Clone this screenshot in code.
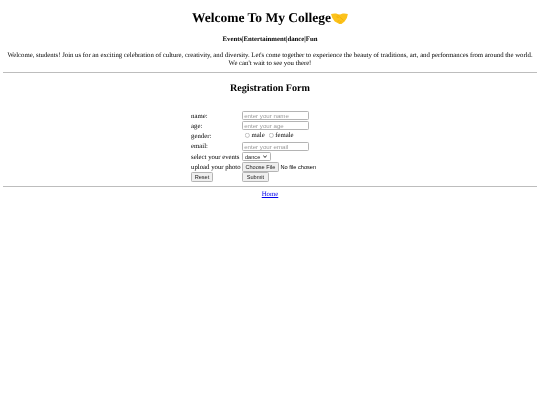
<div class="page">
  <h1>Welcome To My College<svg class="shake" viewBox="0 0 36 24" preserveAspectRatio="none" aria-hidden="true">
    <path d="M0 4 Q6 2 11 3 L18 5 L25 3 Q30 2 36 4 Q35 13 29 18 L22 23 Q19 24 16 22 L8 18 Q2 13 0 4 Z" fill="#fcc21b"/>
    <path d="M18 5 L12 9 Q14 12 18 9 L27 16 M14 19 L18 15 M18 21 L22 17" fill="none" stroke="#eda600" stroke-width="1.2"/>
  </svg></h1>
  <h4>Events|Entertainment|dance|Fun</h4>
  <p>Welcome, students! Join us for an exciting celebration of culture, creativity, and diversity. Let's come together to experience the beauty of traditions, art, and performances from around the world. We can't wait to see you there!</p>
  <hr />
  <h2>Registration Form</h2>
  <br />
  <form on:submit|preventDefault>
    <table>
      <tbody>
        <tr>
          <td class="label">name:</td>
          <td><input type="text" placeholder="enter your name" /></td>
        </tr>
        <tr>
          <td class="label">age:</td>
          <td><input type="text" placeholder="enter your age" /></td>
        </tr>
        <tr>
          <td class="label">gender:</td>
          <td class="radios">
            <input type="radio" name="gender" id="male" /><label for="male">male</label>
            <input type="radio" name="gender" id="female" /><label for="female">female</label>
          </td>
        </tr>
        <tr>
          <td class="label">email:</td>
          <td><input type="email" placeholder="enter your email" /></td>
        </tr>
        <tr>
          <td class="label">select your events</td>
          <td>
            <select>
              <option>dance</option>
              <option>music</option>
              <option>drama</option>
            </select>
          </td>
        </tr>
        <tr>
          <td class="label">upload your photo</td>
          <td><input type="file" /></td>
        </tr>
        <tr>
          <td><input type="reset" value="Reset" /></td>
          <td><input type="submit" value="Submit" /></td>
        </tr>
      </tbody>
    </table>
  </form>
  <hr class="bottom" />
  <div class="home"><a href="#home">Home</a></div>
</div>

<style>
:global(body) {
    margin: 0;
    background: #fff;
}
.page {
    zoom: 0.421875;
    padding: 0 8px;
    font-family: "Liberation Serif", "Times New Roman", serif;
    color: #000;
    text-align: center;
    display: flow-root;
    text-rendering: geometricPrecision;
    filter: blur(0.25px);
}
h1 {
    font-size: 32px;
    margin: 24px 0 23.5px;
}
.shake {
    width: 40px;
    height: 30px;
    vertical-align: -5px;
}
h2 {
    font-size: 24px;
    margin: 24px 0 22px;
}
h4 {
    font-size: 16px;
    margin: 21.28px 0;
}
p {
    font-size: 16px;
    line-height: 18px;
    margin: 16px 0 11px;
}
hr {
    margin: 8px 0;
    border: 0;
    border-top: 1px solid #bdbdbd;
}
table {
    margin: 0 auto;
    text-align: left;
    font-size: 16px;
    border-spacing: 0;
}
td {
    box-sizing: border-box;
    height: 24.4px;
    padding: 0 2px;
}
td.label {
    padding-top: 3px;
}
input,
select {
    font-family: "Liberation Sans", Arial, sans-serif;
    font-size: 13.33px;
    box-sizing: border-box;
}
input[type="text"],
input[type="email"] {
    width: 158px;
    height: 22px;
    padding: 1px 2px;
    font-size: 14.6px;
    border: 1px solid #b4b4b4;
    border-radius: 3px;
}
input::placeholder {
    color: #9a9a9a;
}
.radios {
    padding-left: 3px;
}
.radios input {
    margin: 0 3px 0 5px;
    vertical-align: -2px;
}
select {
    appearance: none;
    width: 67px;
    height: 20px;
    padding: 0 4px;
    border: 1px solid #b4b4b4;
    border-radius: 3px;
    color: #222;
    background: #fff url("data:image/svg+xml,%3Csvg xmlns='http://www.w3.org/2000/svg' viewBox='0 0 10 6'%3E%3Cpath d='M1 1l4 4 4-4' fill='none' stroke='%23222' stroke-width='2'/%3E%3C/svg%3E") no-repeat right 5px center / 10px 6px;
}
input[type="reset"],
input[type="submit"] {
    height: 23px;
    padding: 1px 6px;
    border: 1px solid #b4b4b4;
    border-radius: 3px;
    background: #efefef;
    color: #222;
}
input[type="submit"] {
    padding: 1px 8px;
}
input[type="file"] {
    margin-left: -1px;
}
input[type="file"]::file-selector-button {
    height: 23px;
    margin-right: 4px;
    padding: 1px 6px;
    border: 1px solid #b4b4b4;
    border-radius: 3px;
    background: #efefef;
    color: #222;
}
.bottom {
    margin: 8px 0 11px;
}
a {
    color: #0000ee;
}
</style>
